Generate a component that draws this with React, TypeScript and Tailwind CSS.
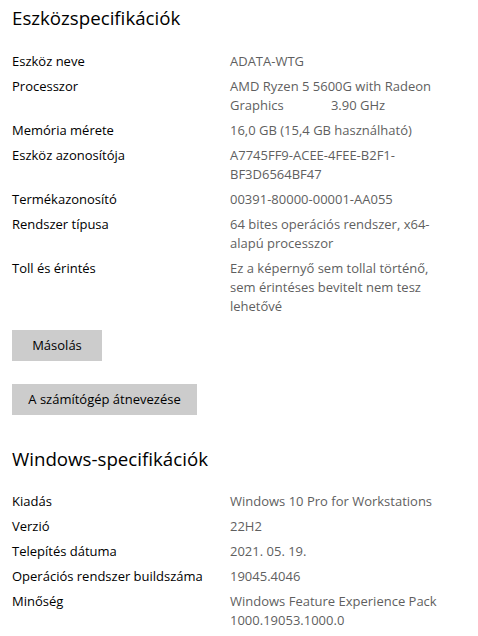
const device = [
  { label: 'Eszköz neve', value: ['ADATA-WTG'] },
  { label: 'Processzor', value: ['AMD Ryzen 5 5600G with Radeon', 'Graphics\u00a0\u00a0\u00a0\u00a0\u00a0\u00a0\u00a0\u00a0\u00a0\u00a0\u00a0\u00a0\u00a0\u00a03.90 GHz'] },
  { label: 'Memória mérete', value: ['16,0 GB (15,4 GB használható)'] },
  { label: 'Eszköz azonosítója', value: ['A7745FF9-ACEE-4FEE-B2F1-', 'BF3D6564BF47'] },
  { label: 'Termékazonosító', value: ['00391-80000-00001-AA055'] },
  { label: 'Rendszer típusa', value: ['64 bites operációs rendszer, x64-', 'alapú processzor'] },
  { label: 'Toll és érintés', value: ['Ez a képernyő sem tollal történő,', 'sem érintéses bevitelt nem tesz', 'lehetővé'] },
]

const windows = [
  { label: 'Kiadás', value: ['Windows 10 Pro for Workstations'] },
  { label: 'Verzió', value: ['22H2'] },
  { label: 'Telepítés dátuma', value: ['2021. 05. 19.'] },
  { label: 'Operációs rendszer buildszáma', value: ['19045.4046'] },
  { label: 'Minőség', value: ['Windows Feature Experience Pack', '1000.19053.1000.0'] },
]

function SpecList({ rows }: { rows: { label: string; value: string[] }[] }) {
  return (
    <div className="flex flex-col gap-[6px]">
      {rows.map((row) => (
        <div key={row.label} className="grid grid-cols-[218px_1fr] text-[13px] leading-[19px]">
          <div className="text-black">{row.label}</div>
          <div className="text-[#5f5f5f]">
            {row.value.map((line, i) => (
              <div key={i} className="whitespace-pre">{line}</div>
            ))}
          </div>
        </div>
      ))}
    </div>
  )
}

export default function App() {
  return (
    <div className="w-[478px] h-[636px] overflow-hidden bg-white px-[12px] pt-[4px] font-['Segoe_UI','Open_Sans','Noto_Sans',sans-serif]">
      {/* Eszközspecifikációk */}
      <h2 className="text-[18.7px] leading-[28px] text-black mb-[20px]">Eszközspecifikációk</h2>
      <SpecList rows={device} />

      <div className="flex flex-col items-start gap-[23px] mt-[14px]">
        <button className="h-[31px] w-[90px] bg-[#cccccc] text-[13px] text-black">Másolás</button>
        <button className="h-[31px] w-[185px] bg-[#cccccc] text-[13px] text-black">A számítógép átnevezése</button>
      </div>

      {/* Windows-specifikációk */}
      <h2 className="text-[18.7px] leading-[28px] text-black mt-[30px] mb-[19px]">Windows-specifikációk</h2>
      <SpecList rows={windows} />
    </div>
  )
}
